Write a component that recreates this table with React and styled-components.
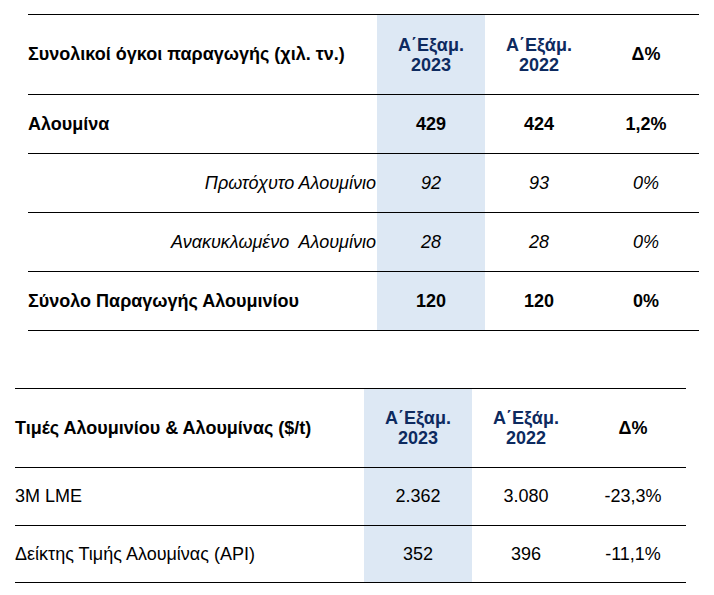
import React from 'react';
import styled, { createGlobalStyle } from 'styled-components';

const GlobalStyle = createGlobalStyle`
  body {
    margin: 0;
    background: #fff;
    font-family: 'Liberation Sans', Arial, sans-serif;
    color: #000;
  }
`;

const production = {
  title: 'Συνολικοί όγκοι παραγωγής (χιλ. τν.)',
  rows: [
    { label: 'Αλουμίνα', values: ['429', '424', '1,2%'], kind: 'bold' },
    { label: 'Πρωτόχυτο Αλουμίνιο', values: ['92', '93', '0%'], kind: 'sub' },
    { label: 'Ανακυκλωμένο  Αλουμίνιο', values: ['28', '28', '0%'], kind: 'sub' },
    { label: 'Σύνολο Παραγωγής Αλουμινίου', values: ['120', '120', '0%'], kind: 'bold' },
  ],
};

const prices = {
  title: 'Τιμές Αλουμινίου & Αλουμίνας ($/t)',
  rows: [
    { label: '3M LME', values: ['2.362', '3.080', '-23,3%'], kind: 'plain' },
    { label: 'Δείκτης Τιμής Αλουμίνας (API)', values: ['352', '396', '-11,1%'], kind: 'plain' },
  ],
};

function DataTable({ data, offsetX, headH, rowH, years }) {
  return (
    <Table $offsetX={offsetX}>
      <HeadRow $h={headH}>
        <LabelCell $kind="bold">{data.title}</LabelCell>
        <PeriodCell $hl>
          <span>Α΄Εξαμ.</span>
          <span>{years[0]}</span>
        </PeriodCell>
        <PeriodCell>
          <span>Α΄Εξάμ.</span>
          <span>{years[1]}</span>
        </PeriodCell>
        <DeltaCell>Δ%</DeltaCell>
      </HeadRow>
      {data.rows.map((row, i) => (
        <Row key={i} $h={rowH[i]}>
          <LabelCell $kind={row.kind}>{row.label}</LabelCell>
          {row.values.map((v, j) => (
            <ValueCell key={j} $kind={row.kind} $hl={j === 0}>
              {v}
            </ValueCell>
          ))}
        </Row>
      ))}
    </Table>
  );
}

export default function App() {
  return (
    <Page>
      <GlobalStyle />
      <DataTable
        data={production}
        offsetX={28}
        headH={79}
        rowH={[58, 58, 58, 58]}
        years={['2023', '2022']}
      />
      <Spacer />
      <DataTable
        data={prices}
        offsetX={15}
        headH={78}
        rowH={[57, 56]}
        years={['2023', '2022']}
      />
    </Page>
  );
}

const Page = styled.div`
  padding-top: 14px;
  width: 714px;
`;

const Spacer = styled.div`
  height: 57px;
`;

const Table = styled.div`
  margin-left: ${({ $offsetX }) => $offsetX}px;
  width: 671px;
  border-top: 1px solid #000;
`;

const Row = styled.div`
  display: grid;
  grid-template-columns: 349px 108px 108px 106px;
  height: ${({ $h }) => $h + 1}px;
  border-bottom: 1px solid #000;
  box-sizing: border-box;
`;

const HeadRow = styled(Row)``;

const Cell = styled.div`
  display: flex;
  align-items: center;
  font-size: 18px;
  background: ${({ $hl }) => ($hl ? '#dde8f4' : 'transparent')};
`;

const LabelCell = styled(Cell)`
  justify-content: ${({ $kind }) => ($kind === 'sub' ? 'flex-end' : 'flex-start')};
  padding-right: 1px;
  font-weight: ${({ $kind }) => ($kind === 'bold' ? 700 : 400)};
  font-style: ${({ $kind }) => ($kind === 'sub' ? 'italic' : 'normal')};
  white-space: pre;
`;

const PeriodCell = styled(Cell)`
  flex-direction: column;
  justify-content: center;
  color: #0d2a5f;
  font-weight: 700;
  line-height: 20px;
`;

const DeltaCell = styled(Cell)`
  justify-content: center;
  font-weight: 700;
`;

const ValueCell = styled(Cell)`
  justify-content: center;
  font-weight: ${({ $kind }) => ($kind === 'bold' ? 700 : 400)};
  font-style: ${({ $kind }) => ($kind === 'sub' ? 'italic' : 'normal')};
`;
